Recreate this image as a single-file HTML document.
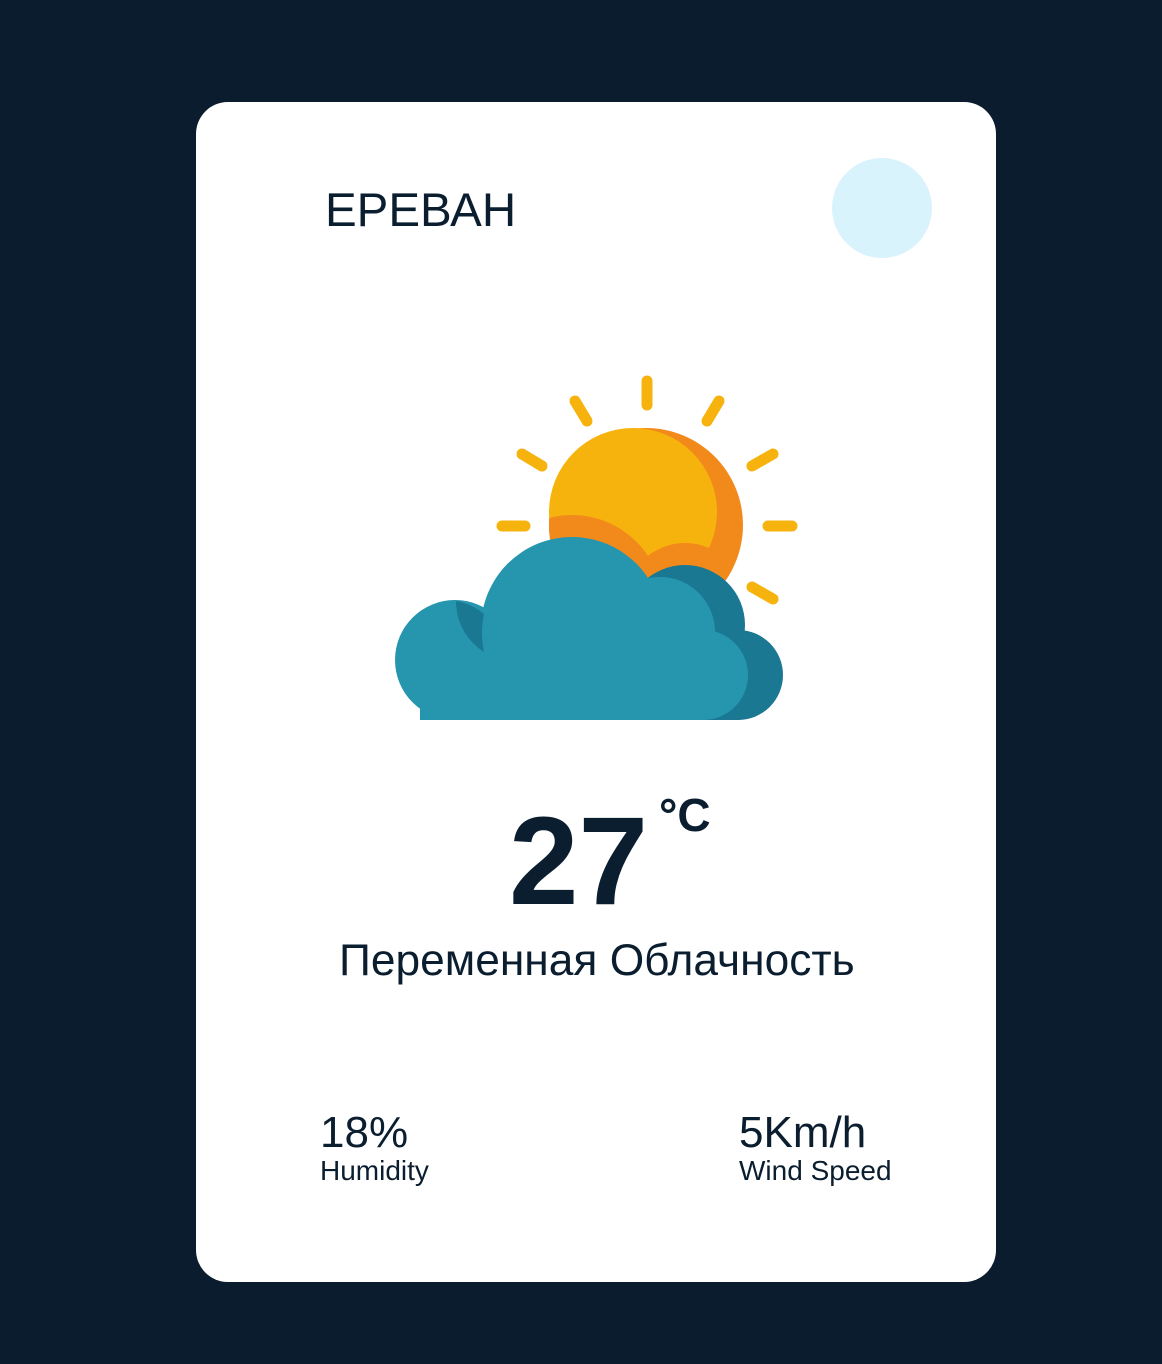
<!DOCTYPE html>
<html><head><meta charset="utf-8"><style>
body{margin:0;width:1162px;height:1364px;background:#0a1c2e;position:relative;overflow:hidden;font-family:"Liberation Sans",Arial,sans-serif;color:#0b1e2f}
.card{position:absolute;left:196px;top:102px;width:800px;height:1180px;background:#fff;border-radius:32px}
.t{position:absolute;line-height:1;white-space:nowrap}
</style></head><body>
<div class="card"></div>
<div class="t" style="left:325px;top:187px;font-size:47.5px">ЕРЕВАН</div>
<div style="position:absolute;left:832px;top:158px;width:100px;height:100px;border-radius:50%;background:#d9f3fd"></div>
<svg style="position:absolute;left:0;top:0" width="1162" height="1364">
<defs><clipPath id="sc"><circle cx="646" cy="525" r="97"/></clipPath>
<g id="cl">
<circle cx="455" cy="660" r="60"/><circle cx="572" cy="628" r="91"/><circle cx="685" cy="625" r="60"/>
<circle cx="738" cy="675" r="45"/><rect x="455" y="620" width="283" height="100"/>
</g></defs>
<g stroke="#f7b30d" stroke-width="11" stroke-linecap="round">
<line x1="647" y1="381" x2="647" y2="405"/><line x1="575" y1="401" x2="587" y2="421"/><line x1="719" y1="401" x2="707" y2="421"/>
<line x1="522" y1="454" x2="542" y2="466"/><line x1="773" y1="454" x2="752" y2="466"/><line x1="502" y1="526" x2="525" y2="526"/>
<line x1="768" y1="526" x2="792" y2="526"/><line x1="752" y1="587" x2="773" y2="599"/></g>
<circle cx="646" cy="525" r="97" fill="#f28a1b"/>
<circle cx="633" cy="512" r="84" fill="#f7b30d"/>
<g clip-path="url(#sc)" fill="#f28a1b"><use href="#cl" transform="translate(0,-22)"/></g>
<g fill="#1b7893"><circle cx="685" cy="625" r="60"/><circle cx="738" cy="675" r="45"/><rect x="680" y="630" width="60" height="90"/></g>
<g fill="#2596ae"><circle cx="455" cy="660" r="60"/><rect x="455" y="660" width="30" height="60"/><circle cx="572" cy="628" r="91"/><circle cx="660" cy="632" r="55"/><circle cx="703" cy="675" r="45"/><rect x="455" y="628" width="248" height="92"/><rect x="420" y="690" width="40" height="30"/></g>
<path d="M456 601 A60 60 0 0 1 484 614 A92 92 0 0 0 484 652 A60 60 0 0 1 456 601Z" fill="#1b7893"/>
</svg>
<div class="t" style="left:509px;top:799px;font-size:125px;font-weight:bold">27</div>
<div class="t" style="left:659px;top:792px;font-size:46px;font-weight:bold">°C</div>
<div class="t" style="left:339px;top:939px;font-size:44.3px">Переменная Облачность</div>
<div class="t" style="left:320px;top:1111px;font-size:44px">18%</div>
<div class="t" style="left:320px;top:1157px;font-size:28px">Humidity</div>
<div class="t" style="left:739px;top:1111px;font-size:44px">5Km/h</div>
<div class="t" style="left:739px;top:1157px;font-size:28px">Wind Speed</div>
</body></html>
